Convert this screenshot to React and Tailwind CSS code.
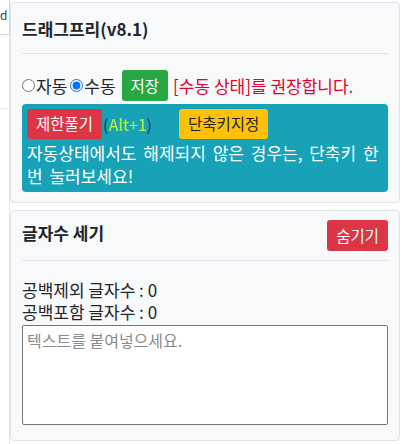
import { useState } from "react";

const font = { fontFamily: '"Noto Sans CJK KR", "Noto Sans", sans-serif' };

function BackgroundStrip() {
    // sliver of the page behind the popup
    return (
        <div className="w-[10px] shrink-0 h-full flex flex-col">
            <div className="h-[35px] border-b border-gray-300 border-r text-[12px] leading-[30px] text-gray-700 overflow-hidden">d</div>
            <div className="h-[74px] border-b border-gray-200 border-r" />
            <div className="flex-1 border-r border-gray-200" />
        </div>
    );
}

function DragFreeCard() {
    const [mode, setMode] = useState("manual");
    return (
        <div className="mt-[2px] h-[201px] rounded border border-[#dfe2e6] bg-[#f8f9fa] px-[11px] flex flex-col">
            <div className="h-[51px] flex items-center text-[17px] font-bold text-[#212529] border-b border-[#e3e5e8] pt-[1px]">
                드래그프리(v8.1)
            </div>
            <div className="mt-[16px] flex items-center h-[31px] text-[17px] text-[#212529]">
                <label className="flex items-center">
                    <input
                        type="radio"
                        name="mode"
                        checked={mode === "auto"}
                        onChange={() => setMode("auto")}
                        className="m-0 w-[13px] h-[13px] accent-[#0075ff]"
                    />
                    <span className="ml-[1px]">자동</span>
                </label>
                <label className="flex items-center ml-[3px]">
                    <input
                        type="radio"
                        name="mode"
                        checked={mode === "manual"}
                        onChange={() => setMode("manual")}
                        className="m-0 w-[13px] h-[13px] accent-[#0075ff]"
                    />
                    <span className="ml-[1px]">수동</span>
                </label>
                <button className="ml-[6px] h-[31px] px-[9px] rounded-[3px] bg-[#28a745] text-white text-[15.5px]">
                    저장
                </button>
                <span className="ml-[5px] text-[#e4002b]">[수동 상태]를 권장합니다.</span>
            </div>
            <div className="mt-[3px] rounded-[4px] bg-[#17a2b8] px-[5px] pt-[5px] pb-[5px]">
                <div className="flex items-center h-[30px]">
                    <button className="h-[30px] px-[9px] rounded-[3px] bg-[#dc3545] text-white text-[15.5px]">
                        제한풀기
                    </button>
                    <span className="ml-[1px] text-[16px] text-[#1e3a44]">
                        (<span className="text-[#b7f53a]">Alt+1</span>)
                    </span>
                    <button className="ml-[27px] h-[30px] px-[9px] rounded-[3px] bg-[#ffc107] text-[#212529] text-[15.5px]">
                        단축키지정
                    </button>
                </div>
                <p className="mt-[2px] text-white text-[17px] leading-[23px] [word-spacing:3px]">
                    자동상태에서도 해제되지 않은 경우는, 단축키 한 번 눌러보세요!
                </p>
            </div>
        </div>
    );
}

function CharCountCard() {
    const [text, setText] = useState("");
    const noSpace = text.replace(/\s/g, "").length;
    return (
        <div className="mt-[7px] h-[231px] rounded border border-[#dfe2e6] bg-[#f8f9fa] px-[11px] flex flex-col">
            <div className="h-[50px] flex items-start justify-between border-b border-[#e3e5e8]">
                <span className="mt-[9px] text-[17px] font-bold text-[#212529]">글자수 세기</span>
                <button className="mt-[9px] h-[31px] px-[9px] rounded-[3px] bg-[#dc3545] text-white text-[15.5px]">
                    숨기기
                </button>
            </div>
            <div className="mt-[18px] text-[17px] leading-[22px] text-[#212529]">
                <div>공백제외 글자수 : {noSpace}</div>
                <div>공백포함 글자수 : {text.length}</div>
            </div>
            <textarea
                value={text}
                onChange={(e) => setText(e.target.value)}
                placeholder="텍스트를 붙여넣으세요."
                className="mt-[2px] h-[100px] w-full resize-none rounded-[2px] border border-[#767676] bg-white px-[4px] py-[2px] text-[16px] placeholder:text-[#8a8a8a] outline-none"
            />
        </div>
    );
}

export default function App() {
    return (
        <div className="w-[404px] h-[444px] bg-white flex overflow-hidden" style={font}>
            <BackgroundStrip />
            <div className="w-[390px] flex flex-col">
                <DragFreeCard />
                <CharCountCard />
            </div>
        </div>
    );
}
